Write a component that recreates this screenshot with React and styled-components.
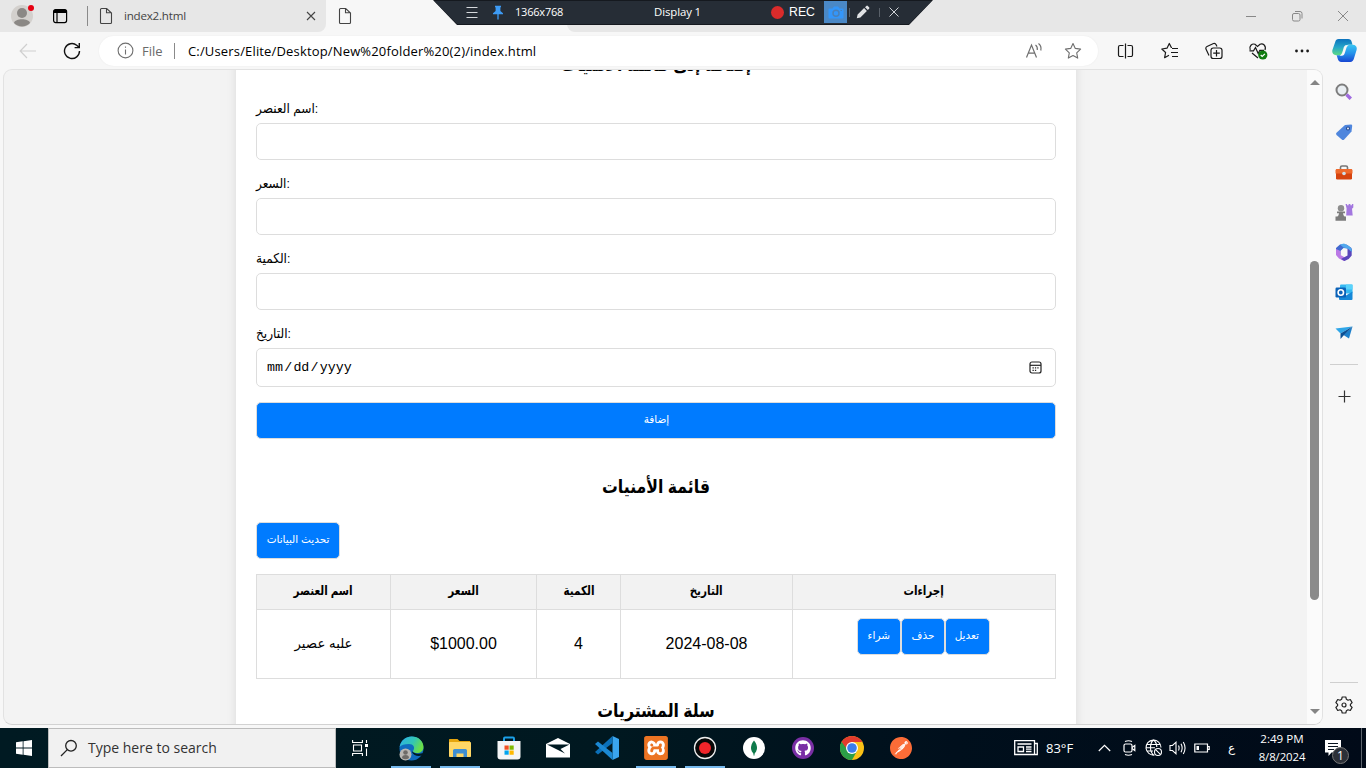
import React from 'react';
import styled, { createGlobalStyle } from 'styled-components';
import { FaGithub } from 'react-icons/fa';
import { SiXampp, SiPostman } from 'react-icons/si';

const GlobalStyle = createGlobalStyle`
  * { box-sizing: border-box; }
  body { margin: 0; overflow: hidden; background: #f7f7f7; }
`;

const UI = "'Open Sans', 'Noto Sans', sans-serif";
const PAGE = "'Liberation Sans', 'DejaVu Sans', sans-serif";

const Screen = styled.div`
  position: relative;
  display: flex;
  flex-direction: column;
  width: 1366px;
  height: 768px;
  overflow: hidden;
  background: #f7f7f7;
  font-family: ${UI};
`;

const Icon = styled.svg.attrs(p => ({ viewBox: p.viewBox || '0 0 24 24', fill: p.fill || 'none' }))`
  display: block;
  flex: none;
  width: ${p => p.$w || p.$s || 24}px;
  height: ${p => p.$s || 24}px;
  margin-left: ${p => p.$ml || 0}px;
`;

const Text = styled.span`
  flex: none;
  font-size: ${p => p.$size}px;
  letter-spacing: ${p => p.$ls || 0}px;
  margin-left: ${p => p.$ml || 0}px;
  width: ${p => (p.$w ? p.$w + 'px' : 'auto')};
  color: ${p => p.$color || '#000'};
  line-height: 18px;
  white-space: nowrap;
`;

/* ---------- tab strip ---------- */

const TabStrip = styled.div`
  display: flex;
  height: 32px;
  flex: none;
  background: #f7f7f7;
`;

const StripStart = styled.div`
  display: flex;
  align-items: center;
  width: 88px;
  padding-left: 10px;
`;

const VRule = styled.i`
  flex: none;
  width: 1px;
  height: ${p => p.$h}px;
  margin-left: ${p => p.$ml || 0}px;
  background: ${p => p.$color || '#8a8a8a'};
`;

const Tab = styled.div`
  display: flex;
  align-items: center;
  width: ${p => p.$w}px;
  padding-left: ${p => p.$pl}px;
`;

const TabWell = styled.div`
  display: flex;
  width: ${p => p.$w || 'auto'};
  flex: ${p => (p.$grow ? 1 : 'none')};
  border-radius: ${p => p.$radius};
  background: #e7e7e7;
`;

const WindowButtons = styled.div`
  display: flex;
  align-items: center;
  margin-left: auto;
  padding-right: 16px;
  gap: 32px;
`;

/* ---------- address row ---------- */

const Toolbar = styled.div`
  display: flex;
  align-items: center;
  height: 37px;
  flex: none;
`;

const AddressBar = styled.div`
  display: flex;
  align-items: center;
  width: 999px;
  height: 30px;
  margin-left: 18px;
  padding: 0 16px 0 18px;
  border-radius: 15px;
  background: #fff;
  box-shadow: 0 0 2px rgba(0, 0, 0, 0.06);
`;

const Spacer = styled.div`
  flex: 1;
`;

const Actions = styled.div`
  display: flex;
  align-items: center;
  width: 268px;
  padding-left: 18px;
  gap: 24px;
`;

/* ---------- screen recorder bar ---------- */

const RecorderShape = styled.div`
  position: absolute;
  top: 0;
  left: 433px;
  width: 500px;
  height: 25px;
  background: #15191f;
  clip-path: polygon(0 0, 500px 0, 476px 25px, 24px 25px);
`;

const RecorderBar = styled.div`
  display: flex;
  align-items: center;
  height: 24px;
  padding: 0 32px;
  background: #262d36;
  clip-path: polygon(1px 1px, 499px 1px, 476px 24px, 24px 24px);
`;

const RecDot = styled.i`
  flex: none;
  width: 13px;
  height: 13px;
  margin-left: 69px;
  border-radius: 50%;
  background: #d92b2b;
`;

const RecText = styled.span`
  flex: none;
  width: 26px;
  margin-left: 5px;
  color: #fff;
  font-family: 'Liberation Sans', sans-serif;
  font-size: 12.3px;
  line-height: 18px;
`;

const CameraButton = styled.div`
  display: flex;
  align-items: center;
  justify-content: center;
  flex: none;
  width: 23px;
  height: 22px;
  margin-left: 9px;
  background: #4a88c6;
`;

/* ---------- browser body ---------- */

const Body = styled.div`
  display: flex;
  height: 659px;
  flex: none;
`;

const Viewport = styled.div`
  display: flex;
  width: 1320px;
  height: 656px;
  margin-left: 3px;
  border: 1px solid #e2e2e2;
  border-bottom-color: #d2d2d2;
  border-radius: 9px;
  background: #f3f3f3;
  overflow: hidden;
`;

const PageArea = styled.div`
  flex: 1;
  overflow: hidden;
`;

const Scrollbar = styled.div`
  display: flex;
  flex-direction: column;
  align-items: center;
  width: 15px;
  padding: 10px 0;
  background: #fbfbfb;
`;

const Arrow = styled.i`
  width: 0;
  height: 0;
  border: 5px solid transparent;
  border-top: ${p => (p.$down ? '5px solid #858585' : '0')};
  border-bottom: ${p => (p.$down ? '0' : '5px solid #858585')};
`;

const Thumb = styled.i`
  width: 9px;
  height: 339px;
  margin: 176px 0 auto;
  border-radius: 5px;
  background: #8b8b8b;
`;

const Container = styled.main`
  width: 840px;
  height: 760px;
  margin: -37px 0 0 232px;
  padding: 20px;
  background: #fff;
  box-shadow: 0 0 10px rgba(0, 0, 0, 0.1);
  font-family: ${PAGE};
  color: #000;
`;

const Heading = styled.h2`
  height: 27px;
  margin: ${p => p.$m};
  font-size: 18.5px;
  font-weight: 700;
  line-height: 23px;
  text-align: center;
  transform: scaleX(0.85);
`;

const Field = styled.div`
  margin-bottom: 15px;
`;

const FieldLabel = styled.label`
  display: block;
  width: max-content;
  height: 18px;
  margin-bottom: 5px;
  font-size: 13.5px;
  line-height: 17px;
  white-space: nowrap;
  transform: scaleX(0.9);
  transform-origin: 0 50%;
`;

const InputBox = styled.div`
  display: flex;
  align-items: center;
  justify-content: space-between;
  height: ${p => p.$h || 37}px;
  padding: 0 13px 0 10px;
  border: 1px solid #ddd;
  border-radius: 5px;
  font-family: 'Liberation Mono', monospace;
  font-size: 13.33px;
`;

const DateText = styled.span`
  display: flex;
  gap: 1.2px;
`;

const Button = styled.button`
  display: block;
  width: ${p => p.$w};
  height: 37px;
  margin: 0;
  padding: 0 0 3px;
  border: 1px solid #ddd;
  border-radius: 5px;
  background: #007bff;
  color: #fff;
  font-family: ${PAGE};
  font-size: 11px;
  line-height: 16px;
  white-space: nowrap;
`;

const Narrow = styled.span`
  display: inline-block;
  margin: 0 -8px;
  transform: scaleX(${p => p.$x || 0.95});
`;

const Table = styled.div`
  display: grid;
  grid-template-columns: 135px 146px 84px 172px 263px;
  grid-template-rows: 36px 69px;
  margin: 15px 0 20px;
`;

const Cell = styled.div`
  display: flex;
  align-items: center;
  justify-content: center;
  padding-bottom: ${p => (p.$head ? 2 : 0)}px;
  border: 1px solid #ddd;
  border-left-width: ${p => (p.$first ? 1 : 0)}px;
  border-top-width: ${p => (p.$head ? 1 : 0)}px;
  background: ${p => (p.$head ? '#f2f2f2' : '#fff')};
  font-size: ${p => (p.$head ? 12.7 : 16)}px;
  font-weight: ${p => (p.$head ? 700 : 400)};
  line-height: 18px;
  white-space: nowrap;
`;

const ActionCell = styled(Cell)`
  align-items: flex-start;
  padding-top: 8px;
  padding-right: 2px;
`;

const Regular = styled.span`
  font-size: 13.3px;
`;

/* ---------- sidebar ---------- */

const Sidebar = styled.aside`
  display: flex;
  flex-direction: column;
  align-items: center;
  width: 42px;
  padding: 13px 0 13px;
`;

const SideIcons = styled.div`
  display: flex;
  flex-direction: column;
  gap: 20px;
`;

const HRule = styled.i`
  flex: none;
  width: 28px;
  height: 1px;
  margin: ${p => p.$m};
  background: #cfcfcf;
`;

/* ---------- taskbar ---------- */

const Taskbar = styled.footer`
  display: flex;
  height: 40px;
  background: linear-gradient(90deg, #001a22 0, #001820 45%, #000f1c 70%, #010a18 100%);
`;

const TaskButton = styled.div`
  display: flex;
  align-items: center;
  justify-content: center;
  width: 48px;
  height: 40px;
  margin-right: ${p => p.$mr || 0}px;
`;

const AppButton = styled(TaskButton)`
  margin-right: 1px;
  background: ${p => (p.$open ? 'linear-gradient(#76b9ed, #76b9ed) center bottom / 40px 2px no-repeat' : 'none')};
`;

const SearchBox = styled.div`
  display: flex;
  align-items: center;
  width: 288px;
  height: 40px;
  padding-left: 11px;
  border: 1px solid #bcbcbc;
  background: #f1f1f1;
`;

const Tray = styled.div`
  display: flex;
  align-items: center;
  margin-left: auto;
`;

const Clock = styled.div`
  display: flex;
  flex-direction: column;
  align-items: center;
  width: 60px;
  margin-left: 15px;
`;

const Notifications = styled.div`
  position: relative;
  margin-left: 13px;
`;

const Badge = styled.span`
  position: absolute;
  left: 7px;
  top: 7px;
  width: 17px;
  height: 17px;
  border: 1px solid #777;
  border-radius: 50%;
  background: #2c3038;
  color: #fff;
  font-size: 12px;
  line-height: 15px;
  text-align: center;
`;

const FileIcon = ({ ml }) => (
  <Icon $w={14} $s={18} $ml={ml} viewBox="0 0 14 18" stroke="#444" strokeWidth="1.1">
    <path d="M2.5 1.5h5.2L12.5 6v9.5a1 1 0 0 1-1 1h-9a1 1 0 0 1-1-1v-13a1 1 0 0 1 1-1zM7.5 1.5v4.2h4.7" />
  </Icon>
);

const columns = ['اسم العنصر', 'السعر', 'الكمية', 'التاريخ', 'إجراءات'];
const fields = ['اسم العنصر:', 'السعر:', 'الكمية:'];

export default function App() {
  return (
    <Screen>
      <GlobalStyle />

      <TabStrip>
        <TabWell $w="326px" $radius="0 0 8px 0">
          <StripStart>
            <Icon $s={24} viewBox="0 0 24 24">
              <circle cx="12" cy="12" r="11" fill="#d3d0cd" />
              <circle cx="12" cy="9" r="5" fill="#8b8885" />
              <path d="M4 19c1-5 15-5 16 0a11 11 0 0 1-16 0z" fill="#8b8885" />
              <circle cx="21" cy="4" r="3" fill="#e60012" />
            </Icon>
            <Icon $s={16} $ml={18} viewBox="0 0 16 16">
              <rect x="1.6" y="1.6" width="13" height="13" rx="2" stroke="#000" strokeWidth="1.2" />
              <path d="M1.5 5V3.4a2 2 0 0 1 2-2h9.2a2 2 0 0 1 2 2V5z" fill="#000" />
              <path d="M5 5v9.5" stroke="#000" strokeWidth="1.2" />
            </Icon>
            <VRule $h={20} $ml={19} />
          </StripStart>
          <Tab $w={238} $pl={11}>
            <FileIcon />
            <Text $size={11.6} $ls={-0.22} $ml={11} $w={178} $color="#444">index2.html</Text>
            <Icon $s={10} $ml={4} viewBox="0 0 10 10" stroke="#444" strokeWidth="1.1">
              <path d="M1 1l8 8M9 1L1 9" />
            </Icon>
          </Tab>
        </TabWell>
        <Tab $w={241} $pl={12}>
          <FileIcon />
        </Tab>
        <TabWell $grow $radius="0 0 0 8px">
          <WindowButtons>
            <Icon $s={14} viewBox="0 0 14 14" stroke="#888"><path d="M2 7.5h10" /></Icon>
            <Icon $s={14} viewBox="0 0 14 14" stroke="#888">
              <rect x="2.5" y="4.5" width="7.5" height="7.5" rx="1.5" />
              <path d="M5 2.5h5a2 2 0 0 1 2 2v5" />
            </Icon>
            <Icon $s={14} viewBox="0 0 14 14" stroke="#888"><path d="M2 2l10 10M12 2L2 12" /></Icon>
          </WindowButtons>
        </TabWell>
      </TabStrip>

      <Toolbar>
        <Icon $s={18} $ml={19} viewBox="0 0 18 18" stroke="#cfcfcf" strokeWidth="1.2">
          <path d="M17 9H1.5M8 2L1.2 9 8 16" />
        </Icon>
        <Icon $s={18} $ml={26} viewBox="0 0 18 18" stroke="#111" strokeWidth="1.4">
          <path d="M16.5 9A7.5 7.5 0 1 1 13.7 3.2L16 5.3M16.3 1v4.6h-4.7" />
        </Icon>
        <AddressBar>
          <Icon $s={17} viewBox="0 0 17 17" stroke="#707070" strokeWidth="1.1">
            <circle cx="8.5" cy="8.5" r="7.4" />
            <path d="M8.5 7.5v5M8.5 4.5v1.3" />
          </Icon>
          <Text $size={13} $ml={8} $w={21} $color="#6a6a6a">File</Text>
          <VRule $h={16} $ml={11} />
          <Text $size={13} $ls={0.16} $ml={13}>C:/Users/Elite/Desktop/New%20folder%20(2)/index.html</Text>
          <Spacer />
          <Icon $s={18} viewBox="0 0 18 18" stroke="#6f6f6f" strokeWidth="1.2">
            <path d="M1.500 15.500L6.500 3l5 12.500M3.200 11.200h6.600M10.500 3q2.200 1.500 1.800 5M13.500 1.500q3.300 2.500 2.300 7" />
          </Icon>
          <Icon $s={18} $ml={21} viewBox="0 0 18 18" stroke="#6f6f6f" strokeWidth="1.1" strokeLinejoin="round">
            <path d="M9 1.500l2.300 4.900 5.300.7-3.900 3.700 1 5.300L9 13.500l-4.700 2.600 1-5.300L1.400 7.100l5.300-.7z" />
          </Icon>
        </AddressBar>
        <Actions>
          <Icon $s={20} viewBox="0 0 20 20" stroke="#1a1a1a" strokeWidth="1.2">
            <path d="M9.500 2.500v15M7.500 4.500H4a1.500 1.500 0 0 0-1.500 1.500v8A1.500 1.500 0 0 0 4 15.500h3.500M11.500 4.500h3.500A1.500 1.500 0 0 1 16.500 6v8a1.500 1.500 0 0 1-1.500 1.500h-3.500" />
          </Icon>
          <Icon $s={20} viewBox="0 0 20 20" stroke="#1a1a1a" strokeWidth="1.2" strokeLinejoin="round">
            <path d="M12 6.500l-.8-.2L9.300 2.500 7 7.200l-5.200.8 3.800 3.500-1 5.200 4.400-2.400M12 7.500h6M11 11.500h7M12 15.500h6" />
          </Icon>
          <Icon $s={20} viewBox="0 0 20 20" stroke="#1a1a1a" strokeWidth="1.2">
            <path d="M5 14.500l-2.800-6A2 2 0 0 1 3 5.500l6.500-3a2 2 0 0 1 2.500 1l1 2" />
            <rect x="7" y="7" width="11" height="10.500" rx="2.300" />
            <path d="M12.500 9v6.500M9.200 12.200h6.600" />
          </Icon>
          <Icon $s={20} viewBox="0 0 20 20" stroke="#1a1a1a" strokeWidth="1.2">
            <path d="M2.200 9C.8 5 4 2.300 7 3.200L9.500 5.500 12 3.200c3-1.200 6.500 1.500 5 5.800M1.500 9.800H5.500l2-3.300 2.700 6 1.600-3.200H16M4 12l6 5" />
            <circle cx="14.800" cy="14" r="4.600" fill="#107c10" stroke="none" />
            <path d="M12.700 14l1.500 1.500 2.700-2.700" stroke="#fff" />
          </Icon>
          <Icon $s={20} viewBox="0 0 20 20" fill="#1a1a1a">
            <circle cx="4.500" cy="10" r="1.400" /><circle cx="10" cy="10" r="1.400" /><circle cx="15.600" cy="10" r="1.400" />
          </Icon>
          <Icon $s={25} $ml={-4} viewBox="0 0 24 24">
            <defs>
              <linearGradient id="cpA" x1="0" y1="0" x2="0" y2="1"><stop offset="0" stopColor="#0b72bd" /><stop offset=".5" stopColor="#25a5c9" /><stop offset="1" stopColor="#5cdb85" /></linearGradient>
              <linearGradient id="cpB" x1="0" y1="0" x2="0" y2="1"><stop offset="0" stopColor="#38c6f3" /><stop offset=".5" stopColor="#2591ea" /><stop offset="1" stopColor="#1746d2" /></linearGradient>
            </defs>
            <path d="M6.500 1h9c2 0 3 1 3.500 3l.7 2.500h-4c-2 0-3 1-3.500 3l-1 4c-.6 2-1.600 3-3.200 3H4C1 16.500-.3 14 .4 11.500L3 4c.6-2 1.500-3 3.500-3z" fill="url(#cpA)" />
            <path d="M17.500 23H9c-2 0-3-1-3.500-3l-1-3.500H8c2 0 3-1 3.500-3l1.200-4c.5-2 1.500-3 3.300-3h4c3 0 4.300 2.500 3.600 5L21 20c-.6 2-1.500 3-3.500 3z" fill="url(#cpB)" />
            <path d="M13 7h3c-1.500.8-2 2-2.500 3.500l-1.200 4c-.4 1.500-1.300 2.500-2.800 2.500h-2c1.500-1 2-2 2.500-3.500l1-3.500c.4-1.500 1-2.600 2-3z" fill="#f7f7f7" />
          </Icon>
        </Actions>
      </Toolbar>

      <Body>
        <Viewport>
          <PageArea>
            <Container>
              <Heading $m="0 0 20px">إضافة إلى قائمة الأمنيات</Heading>
              {fields.map(f => (
                <Field key={f}>
                  <FieldLabel>{f}</FieldLabel>
                  <InputBox />
                </Field>
              ))}
              <Field>
                <FieldLabel>التاريخ:</FieldLabel>
                <InputBox $h={39}>
                  <DateText><span>mm</span><span>/</span><span>dd</span><span>/</span><span>yyyy</span></DateText>
                  <Icon $s={13} viewBox="0 0 13 13" stroke="#222" strokeWidth="1.2">
                    <rect x="1" y="1" width="11" height="11" rx="2" />
                    <path d="M1 4.300h11" />
                    <path d="M3.500 6.800h1.300M5.900 6.800h1.300M8.300 6.800h1.300M3.500 9.300h1.300M5.900 9.300h1.300" />
                  </Icon>
                </InputBox>
              </Field>
              <Button $w="100%"><Narrow>إضافة</Narrow></Button>

              <Heading $m="36px 0 20px">قائمة الأمنيات</Heading>
              <Button $w="84px"><Narrow>تحديث البيانات</Narrow></Button>
              <Table>
                {columns.map((c, i) => (
                  <Cell key={c} $head $first={i === 0}><Narrow $x={0.82}>{c}</Narrow></Cell>
                ))}
                <Cell $first><Regular>علبه عصير</Regular></Cell>
                <Cell>$1000.00</Cell>
                <Cell>4</Cell>
                <Cell>2024-08-08</Cell>
                <ActionCell>
                  <Button $w="44px"><Narrow>شراء</Narrow></Button>
                  <Button $w="44px"><Narrow>حذف</Narrow></Button>
                  <Button $w="45px"><Narrow>تعديل</Narrow></Button>
                </ActionCell>
              </Table>
              <Heading $m="0">سلة المشتريات</Heading>
            </Container>
          </PageArea>
          <Scrollbar>
            <Arrow />
            <Thumb />
            <Arrow $down />
          </Scrollbar>
        </Viewport>

        <Sidebar>
          <SideIcons>
            <Icon $s={20} viewBox="0 0 20 20">
              <circle cx="8" cy="8" r="5.500" stroke="#7d7d7d" strokeWidth="2" fill="#e9eef2" />
              <path d="M12.500 12.500l4.300 4.300" stroke="#a06be0" strokeWidth="3.400" />
            </Icon>
            <Icon $s={20} viewBox="0 0 20 20">
              <path d="M11 3L17 2.500q1.200 0 1.200 1.200L17.500 9.500l-7.300 8q-1.200 1-2.400 0L2.500 13q-1-1.200 0-2.300z" fill="#4f86dd" />
              <circle cx="14" cy="6.500" r="2" fill="#234a93" /><circle cx="14" cy="6.500" r=".9" fill="#fff" />
            </Icon>
            <Icon $s={20} viewBox="0 0 20 20">
              <path d="M6.500 7V5.500q0-1.500 1.500-1.500h4q1.500 0 1.500 1.500V7" stroke="#777" strokeWidth="1.600" />
              <rect x="2" y="7" width="16" height="10.500" rx="1.200" fill="#d6440f" />
              <path d="M1.500 11.500V8.500q0-1.500 1.500-1.500h14q1.500 0 1.500 1.500v3z" fill="#ef6a2c" />
              <circle cx="10" cy="11.500" r="1.800" fill="#cfe0ea" />
            </Icon>
            <Icon $s={20} viewBox="0 0 20 20">
              <path d="M11.500 2h1.600v1.300h1.500V2h1.800v1.300h1.500V2h1.400v3.500l-1.300 1.300.7 6.700h-6.500l.4-7z" fill="#a377df" />
              <circle cx="7" cy="6.200" r="3.200" fill="#8d8d8d" />
              <path d="M3 9.500h8V11.200H9q.3 2.300 1.500 3.300h1.500v4.300H1.500v-4.300H3.500q1.300-1 1.500-3.300H3z" fill="#7c7c7c" />
            </Icon>
            <Icon $s={20} viewBox="0 0 20 20">
              <path d="M6 2.500h6.500L17.500 6v4l-4-3.500-4-.5L6.500 9v4L2 11V6z" fill="#4169cf" />
              <path d="M2 7l4.500 2v4l3.500 2 3 2-3 2-5-2.500-3-3.500z" fill="#bb79e6" />
              <path d="M17.700 7v6.500l-3 3.500-4.200 2L7 17l6.500-3.500V6.500z" fill="#5a46bb" />
              <path d="M6 2.500L10 1.500l5 2.500 2.700 3v3l-4.200-3.500-4-1z" fill="#51a9ed" />
              <circle cx="10" cy="10" r="2.800" fill="#f7f7f7" />
            </Icon>
            <Icon $s={20} viewBox="0 0 20 20">
              <rect x="6" y="2.500" width="12.500" height="9" rx="1" fill="#35b8f1" />
              <path d="M12 2.500h6.500v5H12z" fill="#59d3fb" />
              <path d="M5 9.500l7 4 6.500-4V17q0 1-1 1H6q-1 0-1-1z" fill="#1588d8" />
              <rect x="1.500" y="5.500" width="10.500" height="10" rx="1.200" fill="#0b62b8" />
              <circle cx="6.800" cy="10.500" r="2.700" stroke="#fff" strokeWidth="1.600" />
            </Icon>
            <Icon $s={20} viewBox="0 0 20 20">
              <path d="M1.500 6.500L18.500 4.500 6.500 11.500z" fill="#2fa6e8" />
              <path d="M18.500 4.500L15 16.500l-5.500-3.500z" fill="#1c7fcb" />
              <path d="M6.500 11.500l12-7L10 13l-3.500 4z" fill="#0c4f93" />
            </Icon>
          </SideIcons>
          <HRule $m="22px 0 25px" />
          <Icon $s={13} viewBox="0 0 13 13" stroke="#333" strokeWidth="1.2"><path d="M6.500.5v12M.5 6.500h12" /></Icon>
          <HRule $m="auto 0 12px" />
          <Icon $s={20} viewBox="0 0 20 20" stroke="#222" strokeWidth="1.2" strokeLinejoin="round">
            <path d="M8.200 2h3.600l.6 2.300 1.600.9 2.300-.7 1.800 3.100L16.400 9.300v1.400l1.700 1.700-1.800 3.100-2.300-.7-1.600.9-.6 2.300H8.200l-.6-2.300-1.600-.9-2.300.7-1.800-3.100 1.700-1.700V9.300L1.900 7.600l1.800-3.100 2.300.7 1.600-.9z" />
            <circle cx="10" cy="10" r="2" />
          </Icon>
        </Sidebar>
      </Body>

      <Taskbar>
        <TaskButton>
          <Icon $s={16} viewBox="0 0 16 16" fill="#fff">
            <path d="M0 2.200L6.700 1.300v6.300H0zM7.500 1.200L16 0v7.600H7.500zM0 8.400h6.700v6.300L0 13.800zM7.500 8.400H16V16l-8.500-1.200z" />
          </Icon>
        </TaskButton>
        <SearchBox>
          <Icon $s={18} viewBox="0 0 18 18" stroke="#222" strokeWidth="1.3">
            <circle cx="11" cy="6.800" r="5.300" /><path d="M7.300 10.600L1 17" />
          </Icon>
          <Text $size={14} $ml={10} $color="#333">Type here to search</Text>
        </SearchBox>
        <TaskButton $mr={3}>
          <Icon $s={16} viewBox="0 0 16 16" stroke="#fff" strokeWidth="1.1">
            <path d="M.6 0v2.500h9.800V0M.6 16v-2.500h9.800V16M1.500 5h8v6h-8zM14.500 0v3M14.500 8.500V16" /><path d="M13 4h3v3h-3z" fill="#fff" stroke="none" />
          </Icon>
        </TaskButton>
        <AppButton $open>
          <Icon $s={25} viewBox="0 0 25 25">
            <defs>
              <linearGradient id="eg" x1="0" y1="0" x2="1" y2=".4"><stop offset="0" stopColor="#2bb1ea" /><stop offset=".6" stopColor="#33c6b4" /><stop offset="1" stopColor="#6ade48" /></linearGradient>
            </defs>
            <circle cx="12.500" cy="12.500" r="12" fill="#0f6cbf" />
            <path d="M.6 11C2 4 7 .5 12.800.5c7 0 11.700 5 11.700 10.500 0 4-3 6-6.500 6-3 0-5-1-3.500-3 1.500-2.500 0-6-4.500-6C5.500 8 2 9 .6 11z" fill="url(#eg)" />
            <path d="M14.500 16.500c3.500 2 7 1.300 9.500.5l-.8 2.500c-4 1-8.700.5-10.200-3.500 0-1 .5-.5 1.500.5z" fill="#001a22" />
            <circle cx="6.500" cy="18.500" r="6" fill="#b9b6b2" />
            <circle cx="6.500" cy="16.500" r="2.300" fill="#6e6b68" /><path d="M3 22q0-3 3.500-3t3.500 3q-3.500 2.500-7 0z" fill="#6e6b68" />
          </Icon>
        </AppButton>
        <AppButton $open>
          <Icon $w={22} $s={20} viewBox="0 0 22 20">
            <path d="M0 1.500Q0 1 .8 1h7.700l2 2H21v3H0z" fill="#e5a50e" />
            <rect y="4" width="22" height="15" rx=".8" fill="#ffd766" />
            <path d="M4 19v-6.500Q4 11 5.500 11h11q1.500 0 1.500 1.500V19h-3.500v-3.500h-7V19z" fill="#3f8fd2" />
          </Icon>
        </AppButton>
        <AppButton>
          <Icon $s={24} viewBox="0 0 24 24">
            <path d="M7 6V2.800q0-1.300 1-1.300h8q1 0 1 1.300V6" stroke="#1ba0e8" strokeWidth="2" />
            <path d="M.5 5h23v15.500q0 3-3 3h-17q-3 0-3-3z" fill="#f4f5f6" />
            <path d="M7.500 9.500h4.200v4.200H7.500z" fill="#f25022" /><path d="M12.500 9.500h4.200v4.200h-4.200z" fill="#7fba00" />
            <path d="M7.500 14.500h4.200v4.200H7.500z" fill="#00a4ef" /><path d="M12.500 14.500h4.200v4.200h-4.200z" fill="#ffb900" />
          </Icon>
        </AppButton>
        <AppButton>
          <Icon $w={24} $s={20} viewBox="0 0 24 20">
            <path d="M0 6L12 0l12 6v13.500H0z" fill="#fff" />
            <path d="M1 6.500h22.500L14.500 11l4.500 4.500L12 12z" fill="#001a22" />
          </Icon>
        </AppButton>
        <AppButton>
          <Icon $s={24} viewBox="0 0 24 24">
            <path d="M17.500 0L24 3v18l-6.500 3z" fill="#3aa5ee" />
            <path d="M17.500 0v7L3 18.500 0 16z" fill="#0b70b8" />
            <path d="M17.500 24v-7L3 5.500 0 8z" fill="#1b88d2" />
          </Icon>
        </AppButton>
        <AppButton $open>
          <Icon $s={24} viewBox="0 0 24 24">
            <rect x="1" y="1" width="22" height="22" fill="#fff" />
            <SiXampp size={24} color="#ec7423" />
          </Icon>
        </AppButton>
        <AppButton $open>
          <Icon $s={24} viewBox="0 0 24 24">
            <circle cx="12" cy="12" r="10.500" fill="#080808" stroke="#eee" strokeWidth="1.3" /><circle cx="12" cy="12" r="6" fill="#f1252a" />
          </Icon>
        </AppButton>
        <AppButton>
          <Icon $s={24} viewBox="0 0 24 24">
            <circle cx="12" cy="12" r="11" fill="#fff" />
            <path d="M12 4.500c4.500 5.500 3.500 10.500 0 13.500-3.500-3-4.500-8 0-13.500z" fill="#0f7a4b" /><path d="M12 15v4.500" stroke="#0f7a4b" />
          </Icon>
        </AppButton>
        <AppButton>
          <Icon $s={24} viewBox="0 0 24 24">
            <circle cx="12" cy="12" r="11" fill="#7a2fa5" />
            <FaGithub x="4" y="4" size={16} color="#fff" />
          </Icon>
        </AppButton>
        <AppButton>
          <Icon $s={24} viewBox="0 0 24 24">
            <circle cx="12" cy="12" r="12" fill="#fbc116" />
            <path d="M12 12l5 3-5 9A12 12 0 0 1 1.610 6z" fill="#2c9f47" />
            <path d="M1.610 6A12 12 0 0 1 22.390 6H12l-4.500 8z" fill="#e33b2e" />
            <path d="M1.610 6L7 15l3 1-1 7.600A12 12 0 0 1 1.610 6z" fill="#2c9f47" />
            <circle cx="12" cy="12" r="6" fill="#fff" /><circle cx="12" cy="12" r="4.800" fill="#3b7ded" />
          </Icon>
        </AppButton>
        <AppButton>
          <Icon $s={24} viewBox="0 0 24 24">
            <circle cx="12" cy="12" r="10" fill="#fff" />
            <SiPostman x="1" y="1" size={22} color="#fb6c37" />
          </Icon>
        </AppButton>

        <Tray>
          <Icon $w={24} $s={16} viewBox="0 0 24 16" stroke="#fff" strokeWidth="1.3">
            <path d="M20.500 3.500h2.800v11h-2.800M.7.700h19.800v13.800H.7zM3.500 4h14" /><path d="M4 7h5.500v4.500H4zM12 7h5.500M12 9.200h5.500M12 11.500h5.500" />
          </Icon>
          <Text $size={13} $ml={8} $w={28} $color="#fff">83°F</Text>
          <Icon $w={13} $s={8} $ml={24} viewBox="0 0 13 8" stroke="#fff" strokeWidth="1.2"><path d="M.8 7l5.700-5.700L12.200 7" /></Icon>
          <Icon $w={13} $s={16} $ml={12} viewBox="0 0 13 16" stroke="#fff" strokeWidth="1.2">
            <rect x="1" y="4" width="8" height="8" rx="1.500" /><path d="M9 7.500L11.800 5.500v5L9 8.500M2 1.500Q5.500 0 9 1.500M2 14.500q3.500 1.500 7 0" />
          </Icon>
          <Icon $s={18} $ml={9} viewBox="0 0 18 18" stroke="#fff" strokeWidth="1.1">
            <path d="M9.500 16A7.500 7.500 0 1 1 16 8.500M8.500 1c-4 3.500-4 11.500 0 15M8.500 1c2.500 2 3.300 4.500 3.300 7M1.500 5.500h14M1 8.800h9M1.800 12H8" />
            <circle cx="13" cy="13" r="3.500" /><path d="M10.600 10.600l4.800 4.800" />
          </Icon>
          <Icon $w={18} $s={16} $ml={6} viewBox="0 0 18 16" stroke="#fff" strokeWidth="1.1">
            <path d="M1 5.500h2.500L7 2.200v11.600l-3.500-3.300H1zM9.500 5.500q1.200 2.500 0 5M12 3.800q2.300 4.200 0 8.400M14.300 2q3.500 6 0 12" />
          </Icon>
          <Icon $w={16} $s={10} $ml={7} viewBox="0 0 16 10" stroke="#fff" strokeWidth="1.2">
            <path d="M.8 1h12.700v8H.8zM13.500 3.500h1.700v3h-1.700" /><path d="M2.500 3h2.500v4H2.500z" fill="#fff" stroke="none" />
          </Icon>
          <Text $size={12} $ml={18} $w={9} $color="#fff">ع</Text>
          <Clock>
            <Text $size={11.6} $color="#fff">2:49 PM</Text>
            <Text $size={11.4} $ls={-0.1} $color="#fff">8/8/2024</Text>
          </Clock>
          <Notifications>
            <Icon $w={16} $s={16} viewBox="0 0 16 16">
              <path d="M0 0h16v12.500H6.500L3.500 16v-3.500H0z" fill="#fff" /><path d="M3 3.500h10M3 6.500h10M3 9.500h6" stroke="#0a1420" strokeWidth="1.2" />
            </Icon>
            <Badge>1</Badge>
          </Notifications>
          <VRule $h={40} $ml={20} $color="#5c636c" />
          <VRule $h={40} $ml={3} $color="transparent" />
        </Tray>
      </Taskbar>

      <RecorderShape>
        <RecorderBar>
          <Icon $s={14} viewBox="0 0 14 14" stroke="#d5d8dc"><path d="M1.500 2.500h11M1.500 7.500h11M1.500 12.500h11" /></Icon>
          <Icon $w={12} $s={15} $ml={13} viewBox="0 0 12 15"><path d="M3 .8h6V2.300H8.400V6L11 8.200v1H1v-1L3.600 6V2.300H3z" fill="#3d9bf5" /><path d="M6 9v5.500" stroke="#3d9bf5" strokeWidth="1.3" /></Icon>
          <Text $size={11} $ls={-0.2} $ml={11} $w={49} $color="#fff">1366x768</Text>
          <Text $size={11.4} $ls={-0.1} $ml={90} $w={48} $color="#fff">Display 1</Text>
          <RecDot />
          <RecText>REC</RecText>
          <CameraButton>
            <Icon $w={16} $s={13} viewBox="0 0 16 13">
              <path d="M1.500 2.500h3L6 .5h4l1.500 2h3q1 0 1 1v8q0 1-1 1h-13q-1 0-1-1v-8q0-1 1-1z" fill="#3396fa" />
              <circle cx="8" cy="7.200" r="3" stroke="#4a80b8" strokeWidth="1.5" />
              <path d="M12.500 4.500h1.500" stroke="#4a80b8" />
            </Icon>
          </CameraButton>
          <VRule $h={9} $ml={2} $color="#596069" />
          <Icon $s={14} $ml={6} viewBox="0 0 14 14" fill="#e0e2e4"><path d="M.8 13.200l.8-3.600 6.500-6.500 2.800 2.800-6.500 6.500zM9 2.200L10.300.900q.8-.6 1.500 0l1.300 1.300q.7.700 0 1.500L11.800 5z" /></Icon>
          <VRule $h={9} $ml={9} $color="#596069" />
          <Icon $s={12} $ml={8} viewBox="0 0 12 12" stroke="#cfd2d6"><path d="M1.500 1.500l9 9M10.500 1.500l-9 9" /></Icon>
        </RecorderBar>
      </RecorderShape>
    </Screen>
  );
}
